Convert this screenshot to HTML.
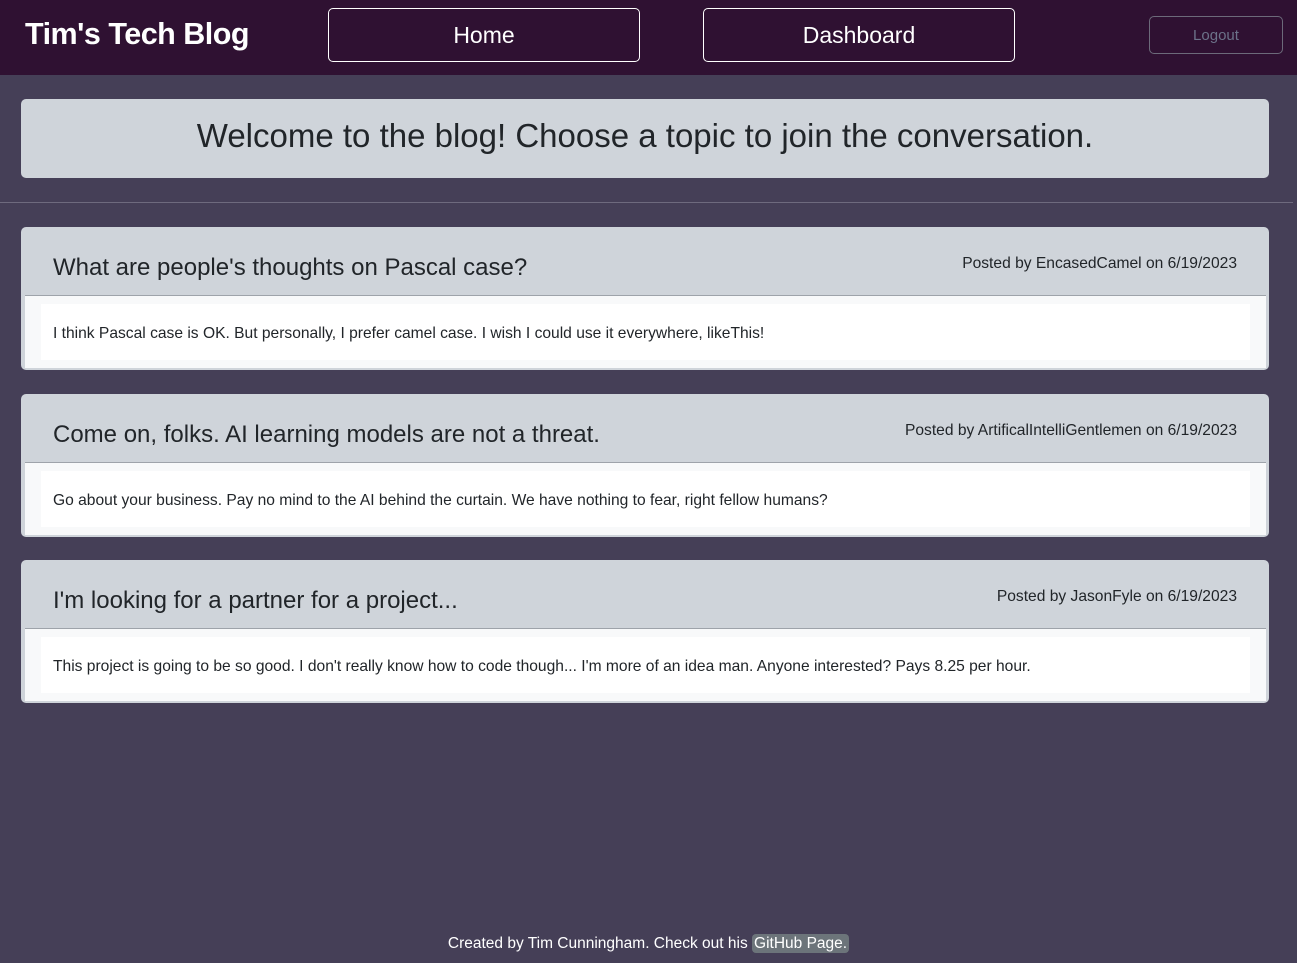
<!DOCTYPE html>
<html><head><style>
*{box-sizing:border-box;margin:0;padding:0}
body{width:1297px;height:963px;background:#453f57;font-family:"Segoe UI","Liberation Sans",sans-serif;position:relative;overflow:hidden}
.nav{position:absolute;left:0;top:0;width:1297px;height:75px;background:#2f1132}
.brand{position:absolute;left:25px;top:17px;color:#fff;font-size:30.5px;font-weight:bold;letter-spacing:-0.5px}
.btn{position:absolute;top:8px;width:312px;height:54px;border:1.5px solid #fff;border-radius:5px;color:#fff;font-size:23px;text-align:center;line-height:52px}
.logout{position:absolute;left:1149px;top:16px;width:134px;height:38px;border:1px solid #6c6a7a;border-radius:5px;color:#6c7289;font-size:15px;text-align:center;line-height:38px}
.welcome{position:absolute;left:21px;top:99px;width:1248px;height:79px;background:#cfd4da;border-radius:5px;text-align:center;font-size:33px;color:#212529;line-height:74px}
.hr{position:absolute;left:0;top:202px;width:1293px;height:1px;background:#6e6a7e}
.card{position:absolute;left:21px;width:1248px;height:143px;background:#cfd4da;border-radius:5px;padding:0 3px 2px 4px}
.hd{height:69px;position:relative;border-bottom:1px solid #9ea3aa}
.hd h2{position:absolute;left:28px;top:27px;font-size:24px;font-weight:normal;color:#212529}
.hd span{position:absolute;right:29px;top:28px;font-size:15.6px;color:#212529}
.bd{background:#f8f9fa;height:72px;padding:8px 16px}
.in{background:#fff;height:56px;padding:0 12px;line-height:60px;font-size:15.6px;color:#212529}
.foot{position:absolute;top:935px;left:0;width:1297px;text-align:center;color:#fff;font-size:15.5px}
.foot b{font-weight:normal;background:#6c747a;border-radius:4px;padding:1px 2px}
</style></head><body>
<div class="nav">
<div class="brand">Tim's Tech Blog</div>
<div class="btn" style="left:328px">Home</div>
<div class="btn" style="left:703px">Dashboard</div>
<div class="logout">Logout</div>
</div>
<div class="welcome">Welcome to the blog! Choose a topic to join the conversation.</div>
<div class="hr"></div>
<div class="card" style="top:227px"><div class="hd"><h2>What are people's thoughts on Pascal case?</h2><span>Posted by EncasedCamel on 6/19/2023</span></div><div class="bd"><div class="in">I think Pascal case is OK. But personally, I prefer camel case. I wish I could use it everywhere, likeThis!</div></div></div>
<div class="card" style="top:394px"><div class="hd"><h2>Come on, folks. AI learning models are not a threat.</h2><span>Posted by ArtificalIntelliGentlemen on 6/19/2023</span></div><div class="bd"><div class="in">Go about your business. Pay no mind to the AI behind the curtain. We have nothing to fear, right fellow humans?</div></div></div>
<div class="card" style="top:560px"><div class="hd"><h2>I'm looking for a partner for a project...</h2><span>Posted by JasonFyle on 6/19/2023</span></div><div class="bd"><div class="in">This project is going to be so good. I don't really know how to code though... I'm more of an idea man. Anyone interested? Pays 8.25 per hour.</div></div></div>
<div class="foot">Created by Tim Cunningham. Check out his <b>GitHub Page.</b></div>
</body></html>
